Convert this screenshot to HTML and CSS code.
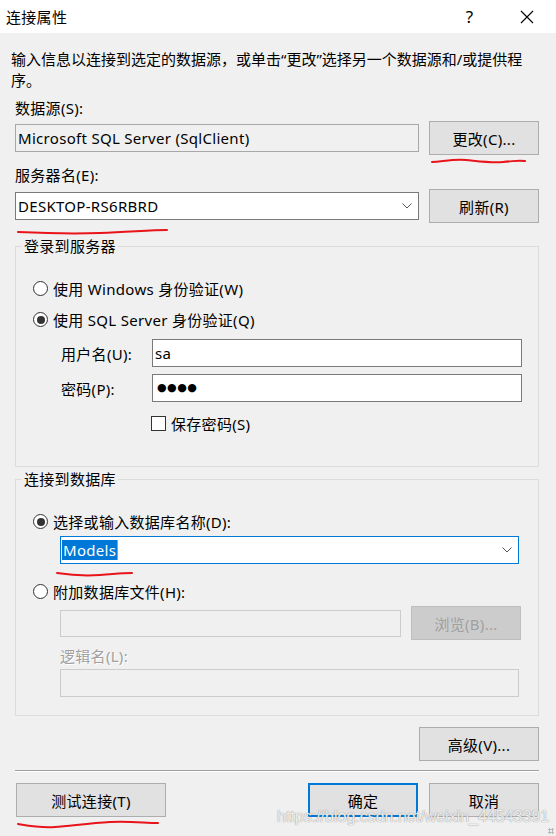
FILE: index.html
```html
<!DOCTYPE html>
<html lang="zh-CN">
<head>
  <meta charset="UTF-8" />
  <title>连接属性</title>
  <link rel="stylesheet" href="styles.css">
</head>
<body>
  <div class="titlebar">
    <span class="title">连接属性</span>
    <span class="tb-btn tb-help">?</span>
    <span class="tb-btn">
      <svg width="14" height="14" viewBox="0 0 14 14"><path d="M1 1 L13 13 M13 1 L1 13" stroke="#000" stroke-width="1.1" fill="none"/></svg>
    </span>
  </div>

  <div class="dialog">
    <p class="intro">输入信息以连接到选定的数据源，或单击“更改”选择另一个数据源和/或提供程<br>序。</p>

    <!-- data source -->
    <div class="field-label first">数据源(S):</div>
    <div class="row">
      <div class="input readonly">Microsoft SQL Server (SqlClient)</div>
      <button class="btn">更改(C)...</button>
    </div>

    <!-- server -->
    <div class="field-label">服务器名(E):</div>
    <div class="row row-server">
      <div class="input combo">
        <span>DESKTOP-RS6RBRD</span>
        <svg class="chevron" width="10" height="6" viewBox="0 0 10 6"><polyline points="0.5,0.5 5,5 9.5,0.5" fill="none" stroke="#555" stroke-width="1"/></svg>
      </div>
      <button class="btn">刷新(R)</button>
    </div>

    <fieldset class="group group-login">
      <legend>登录到服务器</legend>
      <label class="radio-row first"><input type="radio" name="auth"> 使用 Windows 身份验证(W)</label>
      <label class="radio-row second"><input type="radio" name="auth" checked> 使用 SQL Server 身份验证(Q)</label>
      <div class="cred-row user">
        <span class="cred-label">用户名(U):</span>
        <div class="input">sa</div>
      </div>
      <div class="cred-row pass">
        <span class="cred-label">密码(P):</span>
        <div class="input"><span class="dots">●●●●</span></div>
      </div>
      <label class="check-row"><input type="checkbox"> 保存密码(S)</label>
    </fieldset>

    <fieldset class="group group-db">
      <legend>连接到数据库</legend>
      <label class="radio-row first"><input type="radio" name="db" checked> 选择或输入数据库名称(D):</label>
      <div class="input combo focused db-combo">
        <span class="selected">Models</span><span class="caret"></span>
        <svg class="chevron" width="10" height="6" viewBox="0 0 10 6"><polyline points="0.5,0.5 5,5 9.5,0.5" fill="none" stroke="#555" stroke-width="1"/></svg>
      </div>
      <label class="radio-row attach"><input type="radio" name="db"> 附加数据库文件(H):</label>
      <div class="file-row">
        <div class="input disabled"></div>
        <button class="btn btn-disabled">浏览(B)...</button>
      </div>
      <div class="disabled-label">逻辑名(L):</div>
      <div class="input disabled logical"></div>
    </fieldset>

    <div class="advanced-row">
      <button class="btn btn-wide">高级(V)...</button>
    </div>

    <div class="separator"></div>

    <div class="footer">
      <button class="btn btn-test">测试连接(T)</button>
      <span class="spacer"></span>
      <button class="btn btn-default">确定</button>
      <button class="btn">取消</button>
    </div>
  </div>

  <!-- red pen marks drawn over the dialog -->
  <svg class="marks" width="556" height="836" viewBox="0 0 556 836">
    <g fill="none" stroke="#e8141a" stroke-width="2" stroke-linecap="round">
      <path d="M432 162 C 445 161, 455 159, 466 160 S 490 163, 503 162 S 518 160, 525 161"/>
      <path d="M18 232 C 40 233, 70 234, 100 233 S 150 230, 167 230"/>
      <path d="M57 573 C 70 575, 85 576, 100 575 S 120 573, 132 573"/>
      <path d="M18 824 C 30 826, 40 828, 55 827 S 90 823, 110 822 S 145 823, 158 823"/>
    </g>
  </svg>

  <div class="watermark">https://blog.csdn.net/weixin_44543391</div>
  <div class="grip"></div>
</body>
</html>
```

FILE: styles.css
```css
* {
  box-sizing: border-box;
}

html, body {
  margin: 0;
}

body {
  width: 556px;
  height: 836px;
  overflow: hidden;
  position: relative;
  background: #f0f0f0;
  color: #000;
  font-family: "Noto Sans", "Noto Sans CJK SC", sans-serif;
  font-size: 15px;
  letter-spacing: 0.3px;
}

/* title bar */
.titlebar {
  height: 33px;
  background: #fff;
  display: flex;
  align-items: center;
  padding-left: 6px;
}
.title {
  flex: 1;
}
.tb-btn {
  width: 57px;
  height: 33px;
  display: flex;
  align-items: center;
  justify-content: center;
}
.tb-help {
  font-size: 17px;
}
.tb-btn:last-child {
  margin-right: 1px;
}

/* dialog body */
.dialog {
  padding: 0 17px 0 15px;
}
.intro {
  margin: 16px 0 0 -4px;
  line-height: 21px;
  white-space: nowrap;
  letter-spacing: 0;
}
.field-label {
  line-height: 21px;
  margin-top: 10px;
}
.field-label.first {
  margin-top: 7px;
}
.row {
  display: flex;
  align-items: center;
  gap: 10px;
  margin-top: 2px;
}
.row-server {
  margin-top: 3px;
}

.input {
  flex: 1;
  height: 28px;
  border: 1px solid #7a7a7a;
  background: #fff;
  padding: 0 2px;
  line-height: 26px;
  white-space: nowrap;
}
.input.readonly {
  background: #f0f0f0;
  border-color: #a8a8a8;
}
.input.disabled {
  background: #f0f0f0;
  border-color: #cccccc;
}
.combo {
  display: flex;
  align-items: center;
}
.combo > span:first-child {
  flex: none;
}
.chevron {
  margin-left: auto;
  margin-right: 4px;
}
.input.focused {
  border-color: #0078d7;
}

.btn {
  width: 110px;
  height: 34px;
  background: #e1e1e1;
  border: 1px solid #adadad;
  font: inherit;
  letter-spacing: inherit;
  color: #000;
  padding: 0;
}
.btn-disabled {
  background: #cccccc;
  border-color: #bfbfbf;
  color: #a0a0a0;
}
.btn-wide {
  width: 120px;
}
.btn-default {
  border: 2px solid #0078d7;
}
.btn-test {
  width: 150px;
  margin-left: 1px;
}

/* group boxes */
.group {
  margin: 13px 0 0 0;
  border: 1px solid #dcdcdc;
  padding: 0 16px 32px 17px;
  min-width: 0;
}
.group legend {
  margin-left: -11px;
  padding: 0 2px;
  line-height: 21px;
}
.group-db {
  margin-top: 2px;
  padding-bottom: 18px;
}

.radio-row,
.check-row {
  display: flex;
  align-items: center;
  height: 21px;
  gap: 5px;
  white-space: nowrap;
}
.radio-row.first {
  margin-top: 21px;
}
.radio-row.second {
  margin-top: 10px;
}
.radio-row.attach {
  margin-top: 17px;
}
.radio-row input {
  appearance: none;
  margin: 0;
  width: 15px;
  height: 15px;
  border: 1px solid #333;
  border-radius: 50%;
  background: #fff;
  display: grid;
  place-items: center;
}
.radio-row input:checked::before {
  content: "";
  width: 8px;
  height: 8px;
  border-radius: 50%;
  background: #333;
}

.cred-row {
  display: flex;
  align-items: center;
  margin-top: 9px;
}
.cred-row.pass {
  margin-top: 7px;
}
.cred-label {
  width: 119px;
  padding-left: 28px;
}
.cred-row .input {
  flex: none;
  width: 370px;
}
.dots {
  font-family: "DejaVu Sans", sans-serif;
  font-size: 11px;
  letter-spacing: 0.5px;
  padding-left: 2px;
  vertical-align: top;
}

.check-row {
  margin: 11px 0 0 118px;
}
.check-row input {
  appearance: none;
  margin: 0;
  width: 15px;
  height: 15px;
  border: 1px solid #333;
  background: #fff;
}

.db-combo {
  margin: 4px 3px 0 27px;
  padding-left: 1px;
}
.selected {
  background: #0078d7;
  color: #fff;
  line-height: 20px;
  padding: 0 1px;
}
.caret {
  width: 1px;
  height: 20px;
  background: #e8902a;
}

.file-row {
  display: flex;
  align-items: center;
  gap: 10px;
  margin: 4px 1px 0 27px;
}
.file-row .input {
  height: 27px;
}
.disabled-label {
  margin: 6px 0 0 27px;
  line-height: 21px;
  color: #a0a0a0;
  text-shadow: 1px 1px 0 #fff;
}
.logical {
  margin: 2px 3px 0 27px;
}

.advanced-row {
  display: flex;
  justify-content: flex-end;
  margin-top: 11px;
}

.separator {
  margin-top: 9px;
  border-top: 1px solid #a0a0a0;
  border-bottom: 1px solid #fff;
}

.footer {
  display: flex;
  gap: 11px;
  margin-top: 11px;
}
.spacer {
  flex: 1;
}

/* overlays */
.marks {
  position: absolute;
  left: 0;
  top: 0;
  pointer-events: none;
}
.watermark {
  position: absolute;
  left: 277px;
  top: 808px;
  font-family: "Liberation Sans", sans-serif;
  font-size: 16px;
  letter-spacing: 0;
  color: rgba(255, 255, 255, 0.85);
  text-shadow: 0 0 1px rgba(120, 120, 120, 0.6), 0 0 1px rgba(120, 120, 120, 0.6);
  white-space: nowrap;
}
.grip {
  position: absolute;
  right: 2px;
  bottom: 2px;
  width: 6px;
  height: 6px;
  background:
    radial-gradient(circle, #b8b8b8 1px, transparent 1.2px) 0 0 / 3px 3px;
}
```
